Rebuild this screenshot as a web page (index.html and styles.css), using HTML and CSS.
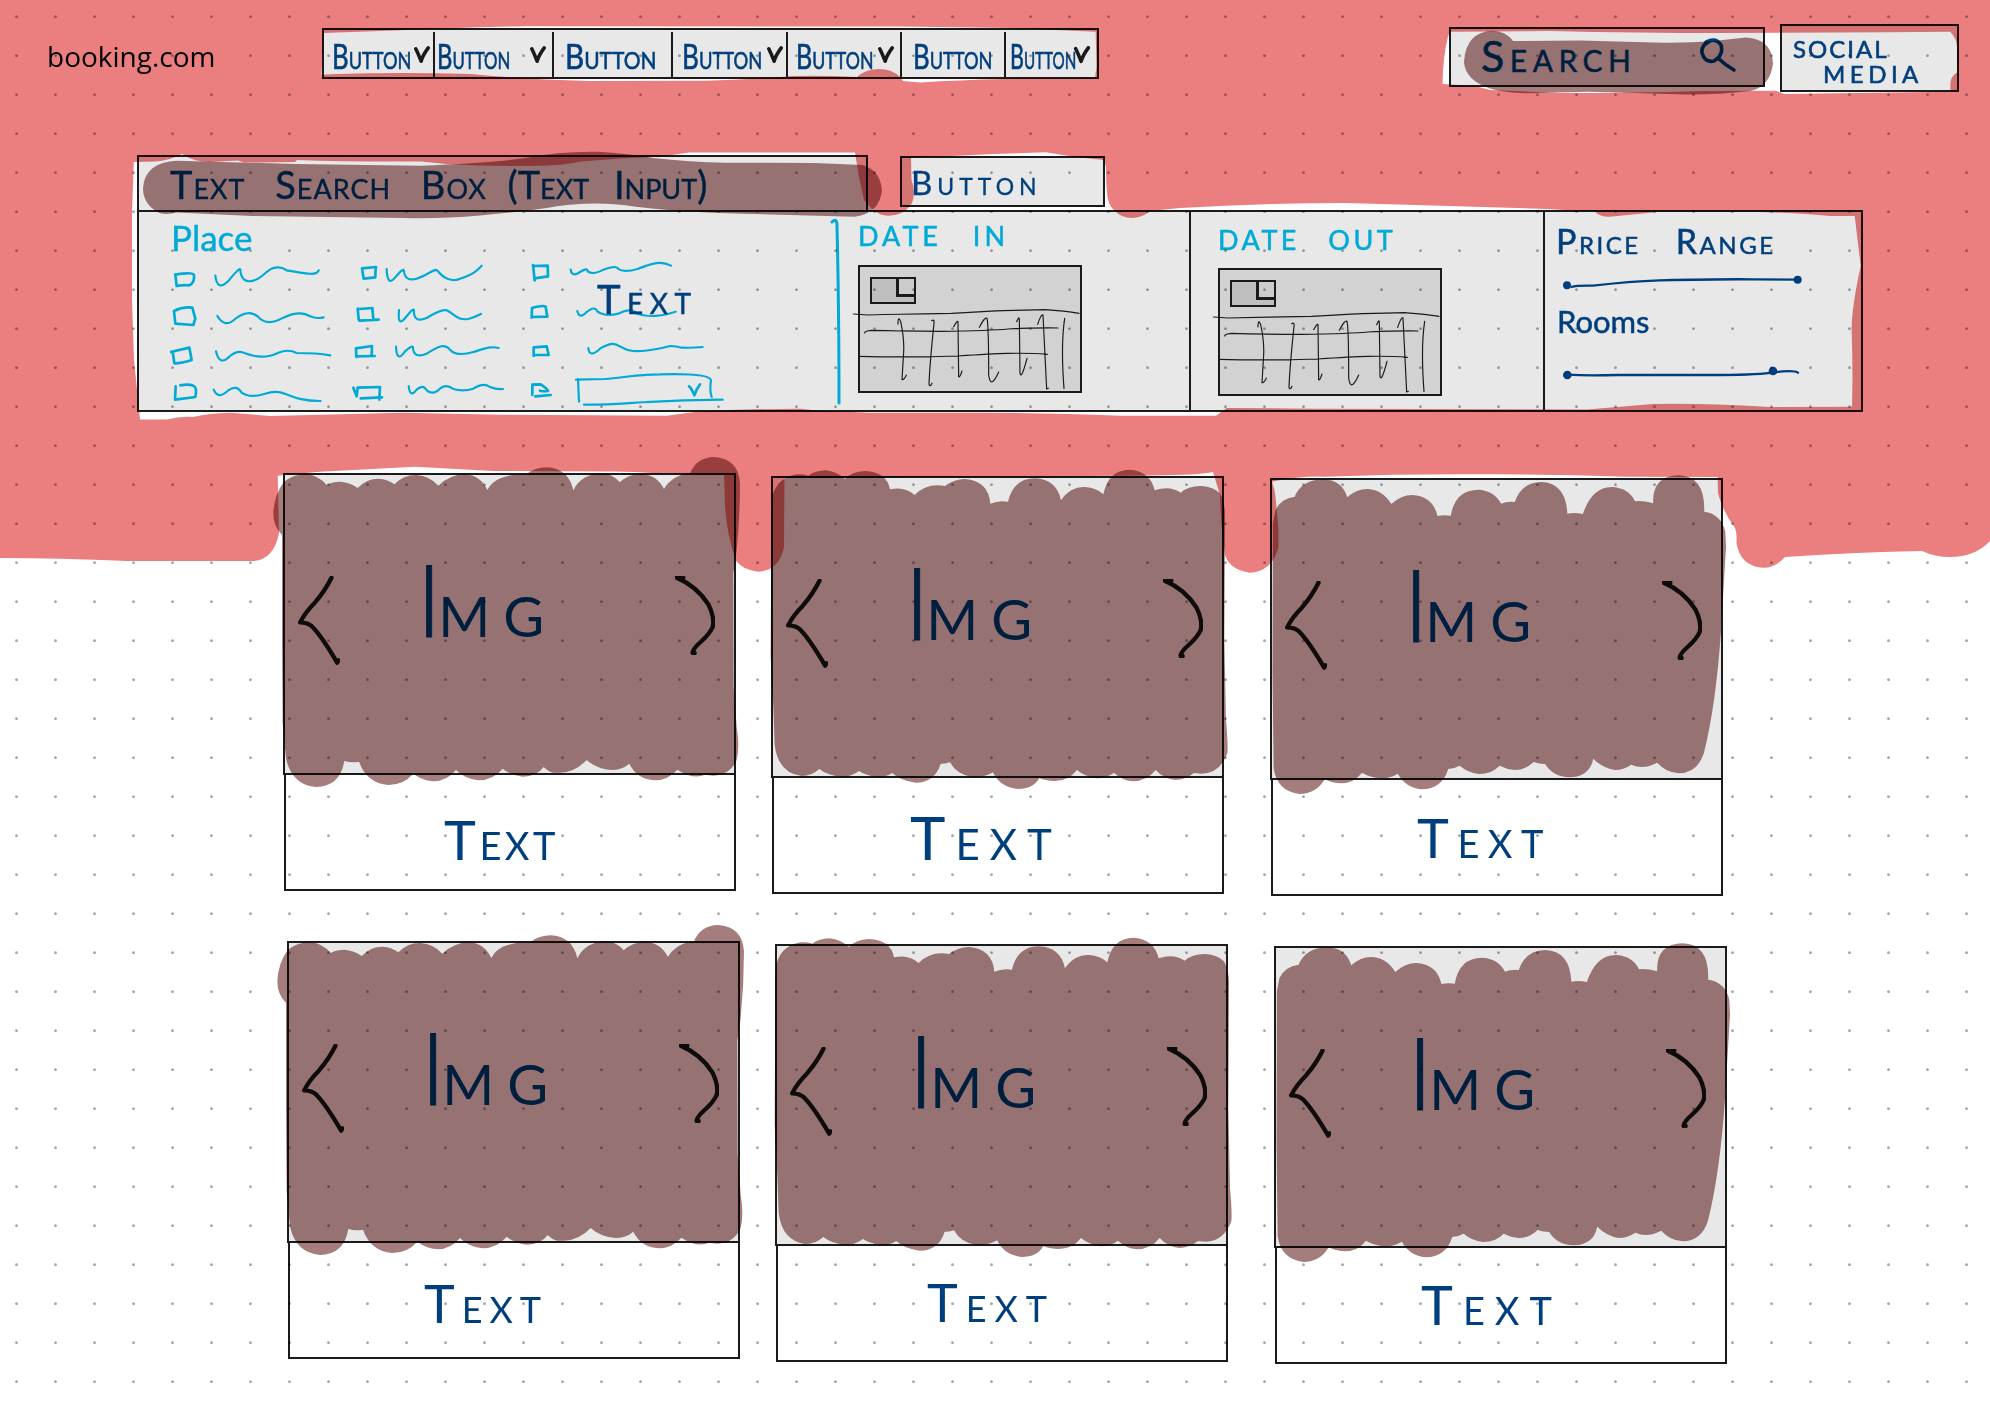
FILE: index.html
```html
<!DOCTYPE html>
<html lang="en">
<head>
<meta charset="utf-8">
<title>booking.com wireframe</title>
<link rel="stylesheet" href="styles.css">
</head>
<body>
<svg class="defs" width="0" height="0" aria-hidden="true">
  <symbol id="vee" viewBox="0 0 18 20"><path d="M2 3Q5 9 8 17Q10 10 16 2"/></symbol>
  <symbol id="prev" viewBox="115 405 125 267" overflow="visible"><path d="M215 410Q195 450 165 485Q135 515 121 544Q145 545 156 556Q185 585 232 665L236 658"/></symbol>
  <symbol id="next" viewBox="1245 405 120 237" overflow="visible"><path d="M1270 410L1250 410Q1310 435 1345 490Q1365 530 1358 558Q1350 577 1325 600Q1294 628 1298 636L1304 636"/></symbol>
  <symbol id="grid" viewBox="0 0 684 384" overflow="visible">
    <path class="thin" d="M-14 147L30 150Q150 147 280 145Q450 135 560 134Q620 138 663 145M20 204Q20 198 40 196Q150 199 250 199Q400 197 450 192Q540 188 600 189M4 274Q150 278 300 273Q400 266 450 265Q520 264 568 268M120 177Q120 150 128 170Q139 220 137 260L132 344Q138 346 145 330M221 167Q230 162 228 175Q215 300 213 358Q216 368 222 355M287 185Q298 165 300 170L302 335Q306 338 312 318M364 187Q380 155 387 160Q392 180 392 330Q398 375 422 321M476 170Q484 150 484 165L486 325Q490 345 507 280M539 178Q550 145 555 150L566 372L571 370M620 160Q608 240 618 370"/>
  </symbol>
</svg>

<div class="page">
  <header class="top">
    <div class="logo">booking.com</div>
    <nav class="nav">
      <a class="c1" style="--s:.79"><span>Button</span><svg><use href="#vee"/></svg></a>
      <a class="c2" style="--s:.73"><span>Button</span><svg><use href="#vee"/></svg></a>
      <a class="c3" style="--s:.91"><span>Button</span></a>
      <a class="c4" style="--s:.80"><span>Button</span><svg><use href="#vee"/></svg></a>
      <a class="c5" style="--s:.77"><span>Button</span><svg><use href="#vee"/></svg></a>
      <a class="c6" style="--s:.79"><span>Button</span></a>
      <a class="c7" style="--s:.66"><span>Button</span><svg><use href="#vee"/></svg></a>
    </nav>
    <div class="search">
      <span>Search</span>
      <svg width="36" height="36" viewBox="1700 37 36 36"><path d="M1710 40Q1701 44 1702 52Q1705 62 1714 60Q1724 54 1721 44Q1716 36 1706 41M1718 57Q1725 64 1734 69"/></svg>
    </div>
    <div class="social"><span>SOCIAL</span><span class="media">MEDIA</span></div>
  </header>

  <main>
    <div class="query">
      <div class="field">Text Search Box <span>(Text Input)</span></div>
      <div class="go">Button</div>
    </div>

    <section class="filters">
      <div class="place">
        <h2>Place</h2>
        <span class="note">Text</span>
        <svg class="list" width="660" height="155" viewBox="150 170 1980 465">
          <g class="box">
            <path d="M166 222L170 257Q190 253 208 255Q224 248 222 224Q218 214 166 223"/>
            <path d="M162 333L166 370L220 374L226 355L217 322Q190 318 162 332"/>
            <path d="M152 455L208 442L215 479Q185 489 163 489L158 454"/>
            <path d="M167 558L165 598L226 590Q232 560 220 556Q205 550 181 555"/>
            <path d="M726 204L731 235L766 231Q766 210 768 200L726 204"/>
            <path d="M713 325L716 357M718 326L757 323L760 358M718 361L776 358"/>
            <path d="M708 444L709 470M708 444L756 437L755 465M709 468L764 467"/>
            <path d="M700 562L710 588L713 562L780 560L778 598M722 594L786 591"/>
            <path d="M1239 194L1244 240M1239 197L1283 196L1284 228L1244 234"/>
            <path d="M1236 323L1235 352M1236 323Q1270 314 1277 319L1282 349L1235 350"/>
            <path d="M1241 443L1241 467M1241 441L1280 438L1286 464L1241 464"/>
            <path d="M1237 556L1237 584M1237 553L1262 552Q1283 566 1284 572Q1270 574 1260 571M1246 588L1292 584"/>
          </g>
          <g class="wave">
            <path d="M286 226Q292 275 325 242Q363 195 361 210Q365 250 400 241C435 232 440 200 475 201Q490 202 500 210C540 216 590 230 596 210"/>
            <path d="M292 347Q315 385 345 356Q385 325 413 348Q440 380 490 352Q540 328 570 348Q590 356 611 351"/>
            <path d="M288 453Q298 500 330 467Q355 447 375 459Q430 480 475 457Q505 445 530 458Q590 458 631 465"/>
            <path d="M281 568Q295 600 325 570Q350 552 365 577Q390 595 435 580C500 560 500 603 602 602"/>
            <path d="M800 206Q802 260 825 232Q852 200 852 212Q855 245 890 235C925 225 945 200 953 212Q985 250 1020 235C1060 222 1070 212 1085 196"/>
            <path d="M837 329Q832 385 858 350Q882 320 882 330Q880 370 920 353Q965 325 980 330C1010 345 1010 360 1045 356Q1065 350 1083 341"/>
            <path d="M828 439Q830 490 855 453Q882 430 879 445Q882 475 920 460C960 435 975 430 990 448Q1010 470 1060 455C1090 446 1110 436 1136 443"/>
            <path d="M866 557Q870 595 890 568Q910 550 920 570Q940 587 962 563Q980 550 1000 566Q1030 575 1060 565Q1090 545 1110 560Q1130 568 1149 566"/>
            <path d="M1352 208Q1355 232 1380 215Q1403 200 1403 213Q1420 225 1450 208Q1490 193 1495 206Q1510 218 1555 205C1590 192 1620 178 1653 196"/>
            <path d="M1372 332Q1378 358 1400 335Q1425 315 1432 333Q1455 350 1495 340Q1535 320 1550 340C1590 352 1620 348 1667 334"/>
            <path d="M1405 443Q1408 475 1440 445C1500 410 1490 450 1540 452Q1580 455 1650 437Q1670 437 1685 442Q1720 443 1748 440"/>
            <path d="M1368 538L1455 536C1520 530 1560 522 1620 522Q1770 518 1773 540Q1768 570 1775 590M1374 536L1377 604M1392 613C1500 615 1560 600 1808 598"/>
            <path class="bold" d="M1707 558Q1715 565 1723 585Q1730 565 1740 552"/>
          </g>
        </svg>
      </div>

      <div class="date in">
        <svg class="rule" width="12" height="188" viewBox="0 0 12 188"><path d="M2 4Q7 -1 7 8Q9 90 9 185"/></svg>
        <h2>DATE IN</h2>
        <div class="cal"><i></i><svg width="228" height="128"><use href="#grid"/></svg></div>
      </div>

      <div class="date out">
        <h2>DATE OUT</h2>
        <div class="cal"><i></i><svg width="228" height="128"><use href="#grid"/></svg></div>
      </div>

      <div class="ranges">
        <h3>Price Range</h3>
        <svg width="240" height="18" viewBox="130 220 720 54"><path d="M155 259Q170 254 220 255Q330 242 420 239Q600 235 700 236L834 237"/><circle cx="142" cy="254" r="12"/><circle cx="834" cy="237" r="12"/></svg>
        <h3 class="rooms">Rooms</h3>
        <svg width="240" height="18" viewBox="127 490 720 54"><path d="M140 522Q200 526 290 523L600 523Q720 522 760 515Q820 507 832 516"/><circle cx="140" cy="523" r="13"/><circle cx="757" cy="511" r="13"/></svg>
      </div>
    </section>

    <section class="cards">
      <article class="card k1"><div class="img"><svg class="p"><use href="#prev"/></svg><b><em>I</em>MG</b><svg class="n"><use href="#next"/></svg></div><p>Text</p></article>
      <article class="card k2"><div class="img"><svg class="p"><use href="#prev"/></svg><b><em>I</em>MG</b><svg class="n"><use href="#next"/></svg></div><p>Text</p></article>
      <article class="card k3"><div class="img"><svg class="p"><use href="#prev"/></svg><b><em>I</em>MG</b><svg class="n"><use href="#next"/></svg></div><p>Text</p></article>
      <article class="card k4"><div class="img"><svg class="p"><use href="#prev"/></svg><b><em>I</em>MG</b><svg class="n"><use href="#next"/></svg></div><p>Text</p></article>
      <article class="card k5"><div class="img"><svg class="p"><use href="#prev"/></svg><b><em>I</em>MG</b><svg class="n"><use href="#next"/></svg></div><p>Text</p></article>
      <article class="card k6"><div class="img"><svg class="p"><use href="#prev"/></svg><b><em>I</em>MG</b><svg class="n"><use href="#next"/></svg></div><p>Text</p></article>
    </section>
  </main>

  <div class="dots"></div>

  <!-- red marker over the header area, with gaps around the boxes -->
  <svg class="marker" width="1990" height="1407" viewBox="0 0 1990 1407">
    <path class="red" d="M0 0H1990V541Q1975 557 1950 557Q1935 557 1922 551Q1860 552 1785 557Q1775 568 1763 567.700Q1740 566 1736.500 543Q1737 533 1735 528Q1722 510 1718 493L1717.600 477L1627 476.700Q1550 474 1479 474.300Q1400 474 1323.600 476.700Q1300 476 1272 481.700Q1275 490 1275.500 497L1278.500 530V547Q1272 572 1250 572.700Q1230 570 1225 555L1221 520L1220 495L1213 472Q1200 475 1150 475.500L784.500 478L784 547Q779 571 758 571.700Q743 570 736 560.700Q727 535 725 507L724 473H653Q630 471 607 471.500L493 471L415 466.700L320 471.700Q300 473 277.700 475.700L279 533Q274 559 254 561L127 561Q60 558 0 558Z
      M324 33L421 29.500Q470 27 526 26.300L900 26.500L1010 28L1095.700 31.700L1096.500 67L1095 78L1003 79Q960 80 920 82.500L903 81L900 77Q892 69 879 69Q866 69 857 77Q820 75 793 76Q740 80 707 80.700L589 81Q520 79 471 74Q400 72 337 74L321.500 74.700Z
      M1449.700 31.700L1550 31Q1640 33 1720 33L1889 32.300L1950.400 31.700Q1957 39 1957 47L1957.600 72Q1951 76 1950.400 83V91.700L1784 94L1776 90.700L1700 91Q1600 94 1550 92.700L1490 90L1475 86L1442.500 84Q1443 55 1448 36.700Z
      M133.800 162L155.700 161.500Q168 161 182 154Q194 162 210 162L238 160.500L244 162.500L295 162L297 160Q350 162 421 161.500L446 164Q500 167 547 165.500Q565 165 581 161.500Q620 158 660 156.700L689 152.500H855L859 177L864 200L873 210Q880 216 889 215.700Q905 215 912 203Q916 192 911.500 180L911 157.500L957 155.700L993 154L1046 152.300L1075 157L1104 160L1106 167Q1106 185 1107.500 197Q1109 206 1114 210Q1121 218 1132 218Q1142 218 1150 211L1180 208Q1260 203 1347 203L1547 209L1595 211.700Q1600 217 1610 216.700L1660 211.700H1753Q1800 213 1830 216H1854.700L1860.700 266Q1851 310 1851.700 333Q1853 370 1852 406.700L1770 407Q1700 403 1653 404L1587 409.500L1313 408.700L1226.700 408L1216 415.700H1120Q1050 413 987 412.700H870L820 410.700L800 408.700Q740 409 696.700 411.700L666.700 415.700L500 414.700L403 412.700L270 416L230 412.700Q210 413 193 417Q180 416 167 419.500H140L134 360L132 300V213Z"/>
    <g class="dark">
      <path d="M143 188Q145 162 177 160.700L295 164L421 165.700Q490 163 526 158Q560 151 598 151.700Q625 153 653 158Q690 162 725 162.700L814 163L862.500 165Q880 170 882 190Q880 213 855 216.700L743 213.700Q680 212 636 206.700Q610 203 593 203.500Q565 204 547 208Q510 213 480 215.500Q440 219 404 218L252 216L177 212.500Q162 216 156 211Q143 203 143 188Z"/>
      <path d="M1464 61.700Q1466 32 1492 30.700Q1506 31 1513 41L1580 40.500L1663 42.700Q1690 43 1716 40.700L1746 37.500Q1772 39 1773 63.500Q1770 87 1750 91Q1715 95 1686 94.500L1588 91.700L1528 93.300Q1505 93 1490 88.500Q1465 80 1464 61.700Z"/>
      <path id="s1" transform="translate(260 440) scale(.33333)" d="M66 285Q40 260 40 220Q42 165 72 125Q100 103 140 103Q175 106 200 135Q218 125 242 125Q270 127 293 144Q320 116 355 116Q385 118 403 133Q430 105 468 105Q510 108 535 137Q570 104 615 103Q660 105 682 150Q705 102 800 102Q825 82 860 82Q925 85 940 151Q965 100 1030 100Q1060 104 1079 127Q1105 102 1145 102Q1190 104 1212 147Q1235 107 1290 100Q1310 52 1362 51Q1435 55 1440 130Q1440 230 1430 330L1420 400L1421 740L1430 860Q1440 920 1430 960Q1410 1005 1360 1007L1335 1004Q1300 1020 1252 989Q1225 1020 1185 1021Q1130 1017 1108 971Q1085 990 1055 990Q1010 987 980 960Q945 997 900 998L880 998Q865 995 851 981Q830 1010 788 1010Q750 1005 728 986Q700 1020 655 1021Q615 1017 588 990Q560 1024 520 1024Q485 1020 460 1001Q430 1035 385 1035Q320 1030 297 965Q275 970 253 963Q240 1040 168 1041Q95 1035 78 955L68 850L66 600Z"/>
      <path id="s2" transform="translate(740 440) scale(.33333)" d="M94 240L95 180Q105 115 170 103Q190 102 205 107Q225 92 257 91Q290 94 315 117Q335 95 375 93Q440 95 450 148Q495 138 524 165Q560 128 615 138Q640 118 675 117Q745 122 751 191Q775 180 804 185Q820 115 885 115Q950 118 963 181Q990 140 1035 141Q1070 143 1090 163Q1105 90 1168 89Q1230 92 1244 151Q1290 135 1322 158Q1345 137 1385 138Q1420 140 1440 160Q1457 190 1455 240L1453 600L1458 840Q1465 920 1462 940Q1440 1000 1385 1001L1362 999Q1335 1020 1305 1020Q1270 1015 1247 990Q1220 1024 1178 1024Q1145 1020 1122 998Q1100 1015 1070 1015Q1035 1010 1011 990Q985 1023 945 1023Q915 1022 898 1014Q880 1047 833 1047Q780 1042 759 997Q735 1012 700 1012Q650 1005 630 967Q617 972 602 971Q585 1027 527 1028Q480 1022 457 999Q435 1012 410 1012Q375 1005 357 993Q335 1010 305 1011Q260 1005 238 987Q215 1008 185 1008Q115 1000 104 915L100 800L92 650Z"/>
      <path id="s3" transform="translate(1220 440) scale(.36990 .33333)" d="M150 210Q165 175 202 170Q220 120 278 118Q330 120 344 172Q370 146 400 147Q440 150 463 192Q490 165 520 165Q575 168 588 228Q605 224 624 227Q635 150 698 149Q740 151 760 191Q775 184 797 186Q815 127 868 126Q935 128 939 221Q960 217 981 222Q1005 142 1058 141Q1105 143 1122 184Q1140 181 1171 190Q1168 108 1240 106Q1312 108 1309 215Q1355 222 1366 275L1368 320L1354 580Q1340 800 1308 940Q1290 1000 1240 1000Q1205 997 1182 968Q1145 990 1112 974Q1090 990 1068 990Q1035 985 1009 956Q1000 1010 945 1012Q900 1010 879 972Q862 972 848 966Q825 990 797 990Q775 988 756 977Q735 1002 700 1002Q670 998 648 977Q635 985 617 987Q600 1048 545 1048Q500 1042 481 1001Q460 1015 435 1015Q405 1012 384 998Q362 1030 325 1030Q300 1028 283 1018Q260 1062 215 1062Q155 1055 145 985L142 700L143 250Z"/>
      <use href="#s1" x="4" y="468"/><use href="#s2" x="4" y="468"/><use href="#s3" x="4" y="468"/>
    </g>
  </svg>
</div>
</body>
</html>
```
FILE: styles.css
```css
* { box-sizing: border-box; }
body { margin: 0; background: #fff; font-family: Lato, "Liberation Sans", sans-serif; color: #003f7d; }
h2, h3, p { margin: 0; font-weight: 400; }
svg { fill: none; stroke-linecap: round; stroke-linejoin: round; display: block; flex: none; }
.defs { position: absolute; }
.page { position: relative; width: 1990px; height: 1407px; overflow: hidden; isolation: isolate; }

.top { display: flex; align-items: flex-start; height: 155px; padding-left: 47px; }
.logo { width: 275px; margin-top: 35px; font: 28px/42px "Open Sans", sans-serif; color: #000; }

.nav { display: grid; grid-template-columns: 111px 119px 119px 115px 114px 104px 1fr; width: 777px; height: 51px; margin-top: 28px; border: 2px solid #1a1a1a; background: #e8e8e8; }
.nav a { display: flex; align-items: center; margin: 2px 0 1px; border-right: 2px solid #1a1a1a; font-size: 34px; line-height: 44px; font-variant: small-caps; }
.nav a span { width: calc(100px * var(--s)); padding-top: 2px; white-space: nowrap; transform: scaleX(calc(var(--s) * .96)); transform-origin: 0 50%; -webkit-text-stroke: .6px currentColor; }
.nav svg { width: 16px; height: 18px; stroke: #1a1a1a; stroke-width: 4; margin-left: 3px; }
.nav .c1 { padding-left: 8px; }
.nav .c2 { padding-left: 2px; }
.nav .c2 svg { margin-left: 20px; }
.nav .c3 { padding-left: 11px; }
.nav .c4 { padding-left: 9px; }
.nav .c4 svg, .nav .c5 svg { margin-left: 5px; }
.nav .c5 { padding-left: 8px; }
.nav .c6 { padding-left: 11px; }
.nav .c7 { padding-left: 4px; border-right: 0; }
.nav .c7 svg { margin-left: -4px; width: 20px; }

.search { display: flex; justify-content: space-between; width: 316px; height: 60px; margin: 27px 0 0 350px; padding: 0 27px 0 30px; border: 2px solid #1a1a1a; background: #e8e8e8; }
.search span { font-size: 43px; line-height: 54px; font-variant: small-caps; letter-spacing: 5.500px; -webkit-text-stroke: .5px currentColor; }
.search svg { margin-top: 9px; stroke: #003f7d; stroke-width: 3.600; }
.social { display: flex; flex-direction: column; width: 179px; height: 68px; margin: 24px 0 0 15px; padding: 10px 0 0 11px; border: 2px solid #1a1a1a; background: #e8e8e8; font-size: 24px; line-height: 25px; letter-spacing: 2px; -webkit-text-stroke: .6px currentColor; }
.media { padding-left: 30px; letter-spacing: 4.500px; }

.query { display: flex; align-items: flex-start; height: 55px; padding-left: 137px; }
.field { width: 731px; height: 57px; padding-left: 31px; border: 2px solid #1a1a1a; background: #e8e8e8; font-size: 38px; line-height: 55px; font-variant: small-caps; letter-spacing: 1px; word-spacing: 19px; white-space: nowrap; -webkit-text-stroke: .4px currentColor; }
.field span { margin-left: -9px; letter-spacing: 0; word-spacing: 15px; }
.go { width: 205px; height: 51px; margin: 1px 0 0 32px; padding-left: 9px; border: 2px solid #1a1a1a; background: #e8e8e8; font-size: 33px; line-height: 48px; font-variant: small-caps; letter-spacing: 5px; -webkit-text-stroke: .3px currentColor; }

.filters { display: grid; grid-template-columns: 691px 361px 354px 1fr; width: 1726px; height: 202px; margin-left: 137px; border: 2px solid #1a1a1a; background: #e8e8e8; }
.filters h2 { color: #00aad6; }
.place { position: relative; padding-left: 32px; }
.place h2 { font-size: 35px; line-height: 51px; height: 45px; -webkit-text-stroke: .4px currentColor; }
.note { position: absolute; left: 458px; top: 64px; font-size: 40px; line-height: 46px; font-variant: small-caps; letter-spacing: 6.500px; -webkit-text-stroke: .5px currentColor; }
.list { stroke: #00aad6; margin-left: -1px; }
.box { stroke-width: 8; }
.wave { stroke-width: 6.500; }
.bold { stroke-width: 8; }
.date { position: relative; border-right: 2px solid #1a1a1a; padding-left: 28px; }
.date h2 { font-size: 27px; letter-spacing: 4px; word-spacing: 20px; -webkit-text-stroke: .5px currentColor; }
.rule { position: absolute; left: 0; top: 6px; stroke: #00aad6; stroke-width: 3; }
.in h2 { line-height: 48px; height: 53px; }
.out h2 { line-height: 55px; height: 56px; letter-spacing: 3.500px; word-spacing: 18px; }
.cal { position: relative; width: 224px; height: 128px; border: 2px solid #1a1a1a; background: #d2d2d2; }
.out { padding-left: 27px; }
.cal i { position: absolute; left: 10px; top: 10px; width: 46px; height: 27px; border: 2px solid #1a1a1a; background: #bfbfbf; }
.cal i::after { content: ""; position: absolute; right: 0; top: 0; width: 15px; height: 15px; border: solid #1a1a1a; border-width: 0 0 3px 3px; background: #ccc; }
.cal svg { position: absolute; left: -2px; top: -2px; overflow: visible; stroke: #1a1a1a; stroke-width: 3.500; }
.ranges { padding-left: 11px; }
.ranges h3 { font-size: 34px; line-height: 58px; height: 62px; font-variant: small-caps; letter-spacing: 2.500px; word-spacing: 24px; white-space: nowrap; -webkit-text-stroke: .5px currentColor; }
.ranges .rooms { font-size: 31px; font-variant: normal; letter-spacing: 0; line-height: 58px; height: 72px; padding-left: 1px; }
.ranges svg { margin-left: 7px; stroke: #003f7d; stroke-width: 7; }
.ranges circle { fill: #003f7d; stroke: none; }

.cards { display: grid; grid-template-columns: 488px 499px 456px; grid-template-rows: 468px 468px; padding: 61px 0 0 283px; }
.card { width: 453px; }
.k2 { margin-top: 3px; }
.k3 { margin-top: 5px; }
.k4 { margin-left: 4px; }
.k5 { margin: 3px 0 0 4px; }
.k6 { margin: 5px 0 0 4px; }
.img { display: flex; align-items: flex-start; height: 302px; padding: 101px 0 0 13px; border: 2px solid #1a1a1a; background: #e8e8e8; }
.img svg { stroke: #161616; stroke-width: 13; }
.p { width: 42px; height: 89px; }
.n { width: 40px; height: 79px; }
.img b { width: 335px; padding-left: 76px; margin-top: -33px; font-size: 56px; line-height: 110px; height: 110px; font-weight: 400; letter-spacing: 13px; white-space: nowrap; }
.img em { font-style: normal; font-weight: 300; font-size: 101px; line-height: 110px; letter-spacing: -4px; -webkit-text-stroke: .8px currentColor; }
.card p { width: 452px; height: 116px; margin-left: 1px; padding-left: 158px; border: 2px solid #1a1a1a; border-top: 0; font-size: 54px; line-height: 130px; font-variant: small-caps; letter-spacing: 3.500px; }
.k2 p { padding-left: 136px; font-size: 60px; line-height: 118px; letter-spacing: 10px; }
.k3 p { padding-left: 144px; letter-spacing: 8.500px; line-height: 116px; }
.k4 p { padding-left: 134px; letter-spacing: 7px; line-height: 121px; font-size: 52px; }
.k5 p { padding-left: 149px; letter-spacing: 8px; line-height: 113px; font-size: 52px; }
.k6 p { padding-left: 144px; letter-spacing: 10px; line-height: 113px; }

.dots { position: absolute; inset: 0; mix-blend-mode: multiply; background: radial-gradient(circle at 16.500px 16.700px, #a4a4a4 0, #a4a4a4 .9px, transparent 1.800px) 0 0 / 39px 39px; }
.marker { position: absolute; inset: 0; mix-blend-mode: multiply; pointer-events: none; }
.red { fill: #eb7e7e; fill-rule: evenodd; }
.dark > * { fill: #a67d7d; mix-blend-mode: multiply; }
```
